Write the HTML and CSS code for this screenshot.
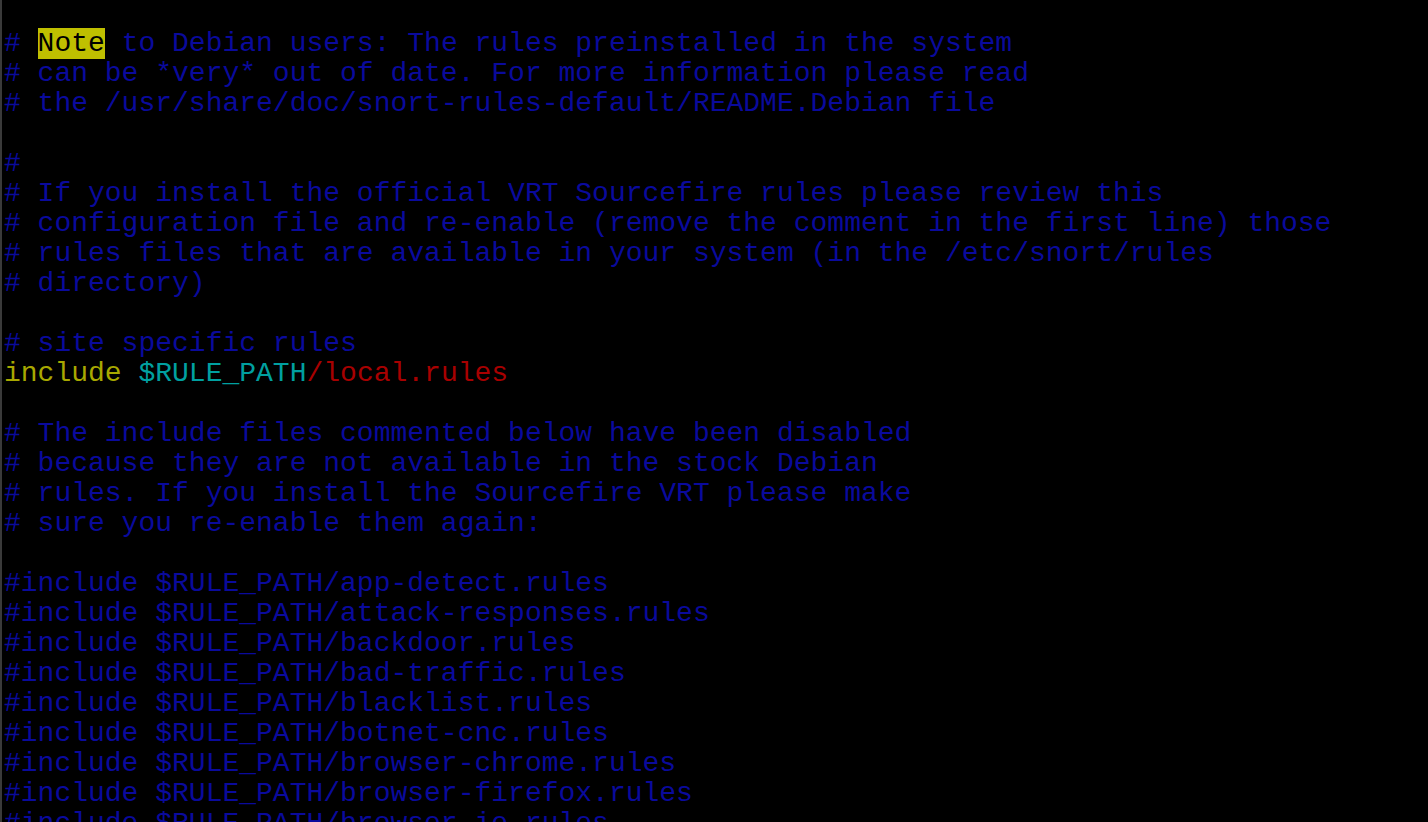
FILE: index.html
```html
<!DOCTYPE html>
<html lang="en">
<head>
    <meta charset="UTF-8">
    <meta name="viewport" content="width=device-width, initial-scale=1.0">
    <title>snort.conf - vim</title>
    <link rel="stylesheet" href="styles.css">
</head>
<body>
    <main class="terminal">
<pre class="buffer">
<span class="comment"># <span class="search">Note</span> to Debian users: The rules preinstalled in the system</span>
<span class="comment"># can be *very* out of date. For more information please read</span>
<span class="comment"># the /usr/share/doc/snort-rules-default/README.Debian file</span>

<span class="comment">#</span>
<span class="comment"># If you install the official VRT Sourcefire rules please review this</span>
<span class="comment"># configuration file and re-enable (remove the comment in the first line) those</span>
<span class="comment"># rules files that are available in your system (in the /etc/snort/rules</span>
<span class="comment"># directory)</span>

<span class="comment"># site specific rules</span>
<span class="keyword">include</span> <span class="variable">$RULE_PATH</span><span class="path">/local.rules</span>

<span class="comment"># The include files commented below have been disabled</span>
<span class="comment"># because they are not available in the stock Debian</span>
<span class="comment"># rules. If you install the Sourcefire VRT please make</span>
<span class="comment"># sure you re-enable them again:</span>

<span class="comment">#include $RULE_PATH/app-detect.rules</span>
<span class="comment">#include $RULE_PATH/attack-responses.rules</span>
<span class="comment">#include $RULE_PATH/backdoor.rules</span>
<span class="comment">#include $RULE_PATH/bad-traffic.rules</span>
<span class="comment">#include $RULE_PATH/blacklist.rules</span>
<span class="comment">#include $RULE_PATH/botnet-cnc.rules</span>
<span class="comment">#include $RULE_PATH/browser-chrome.rules</span>
<span class="comment">#include $RULE_PATH/browser-firefox.rules</span>
<span class="comment">#include $RULE_PATH/browser-ie.rules</span>
</pre>
    </main>
</body>
</html>
```

FILE: styles.css
```css
* {
    margin: 0;
    padding: 0;
    box-sizing: border-box;
}

html,
body {
    height: 100%;
    background-color: #000;
    overflow: hidden;
}

.terminal {
    height: 100%;
    border-left: 2px solid #3a3a3a;
    padding: 29px 0 0 2px;
}

.buffer {
    font-family: "Courier New", "Nimbus Mono PS", "FreeMono", "Liberation Mono", monospace;
    font-size: 28px;
    line-height: 30px;
    color: #c0c0c0;
    white-space: pre;
}

.comment {
    color: #0a0a9c;
}

.search {
    background-color: #bfbf00;
    color: #000;
}

.keyword {
    color: #a8a800;
}

.variable {
    color: #00a0a0;
}

.path {
    color: #a80000;
}
```
